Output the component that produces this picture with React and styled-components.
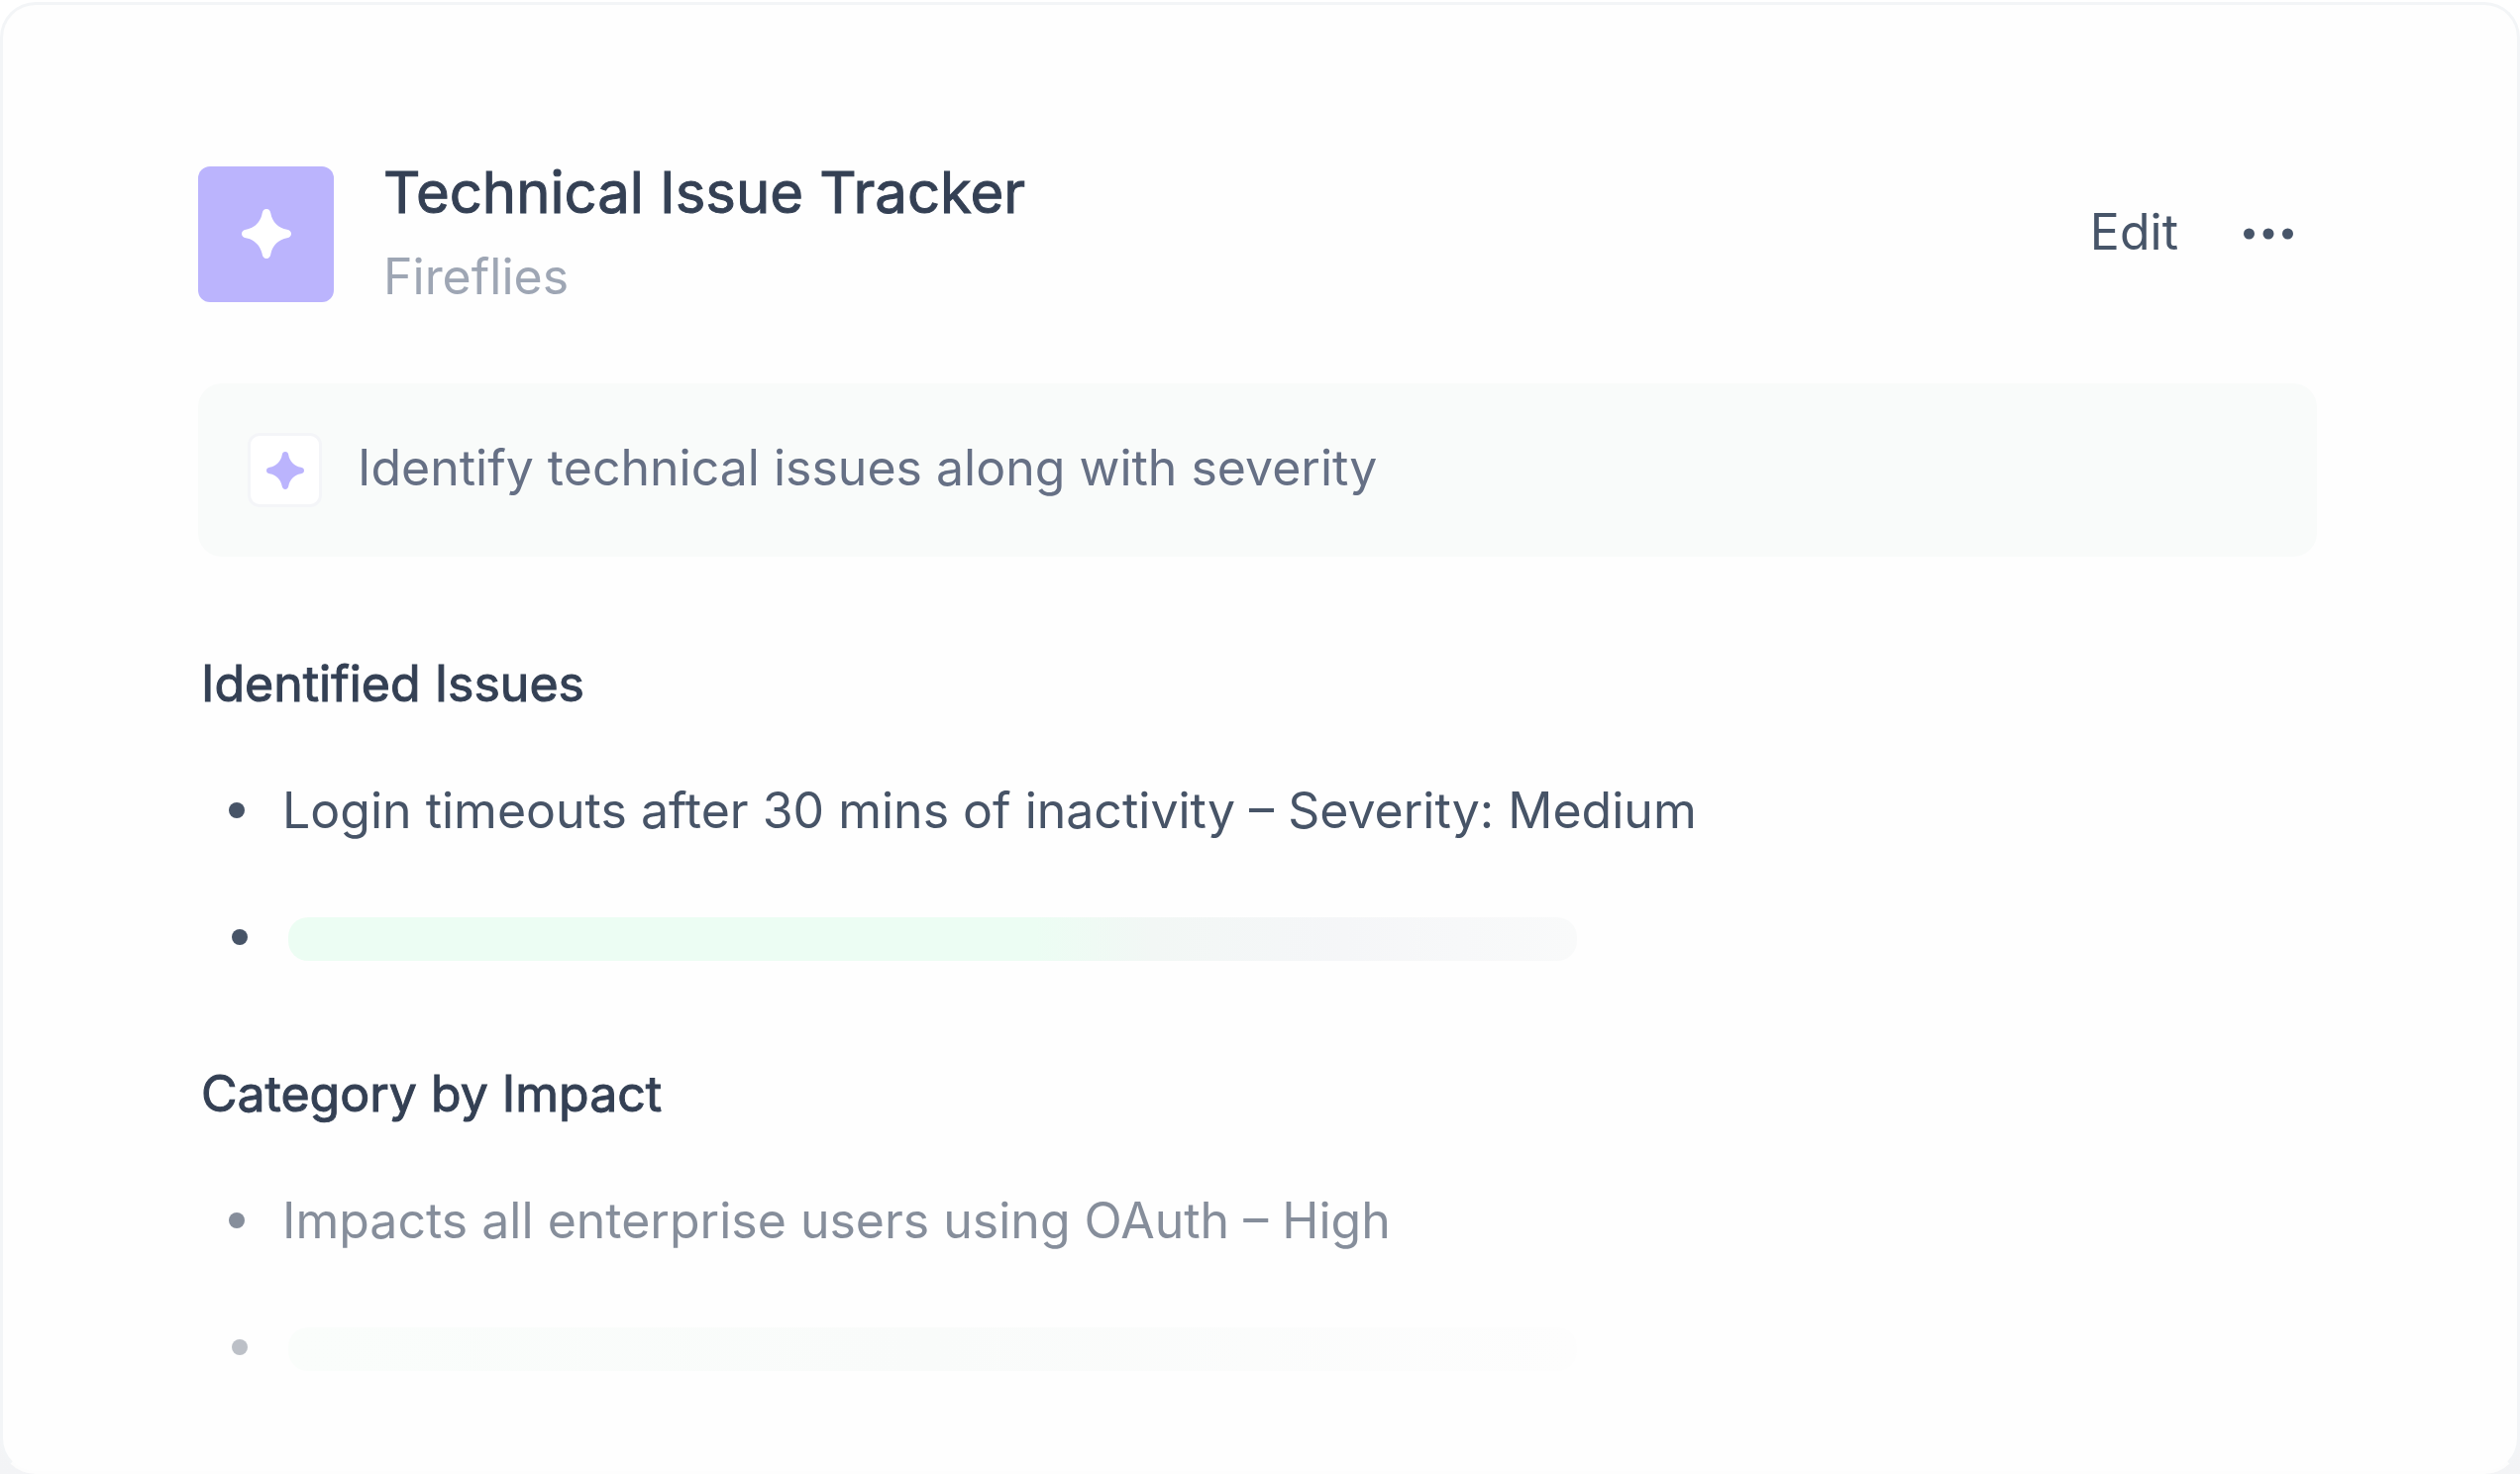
import React from 'react';
import styled, { createGlobalStyle } from 'styled-components';

const issues = [
  {
    title: 'Identified Issues',
    text: 'Login timeouts after 30 mins of inactivity – Severity: Medium',
  },
  {
    title: 'Category by Impact',
    text: 'Impacts all enterprise users using OAuth – High',
    faded: true,
  },
];

const Spark = props => (
  <svg viewBox="0 0 50 50" aria-hidden="true" {...props}>
    <path
      fill="currentColor"
      d="M25 0C27.4 0 28.8 1.6 29.3 4.2C30.8 13 37 19.2 45.8 20.7C48.4 21.2 50 22.6 50 25C50 27.4 48.4 28.8 45.8 29.3C37 30.8 30.8 37 29.3 45.8C28.8 48.4 27.4 50 25 50C22.6 50 21.2 48.4 20.7 45.8C19.2 37 13 30.8 4.2 29.3C1.6 28.8 0 27.4 0 25C0 22.6 1.6 21.2 4.2 20.7C13 19.2 19.2 13 20.7 4.2C21.2 1.6 22.6 0 25 0Z"
    />
  </svg>
);

const App = () => (
  <>
    <GlobalStyle />
    <Card>
      <Header>
        <Tile>
          <Spark width="50" height="50" />
        </Tile>
        <Titles>
          <Title>Technical Issue Tracker</Title>
          <Subtitle>Fireflies</Subtitle>
        </Titles>
        <Actions>
          <EditButton type="button">Edit</EditButton>
          <MoreButton type="button" aria-label="More">
            <svg width="50" height="12" viewBox="0 0 50 12" fill="currentColor">
              <circle cx="5.5" cy="6" r="5.5" />
              <circle cx="25" cy="6" r="5.5" />
              <circle cx="44.5" cy="6" r="5.5" />
            </svg>
          </MoreButton>
        </Actions>
      </Header>

      <Prompt>
        <PromptIcon>
          <Spark width="38" height="38" />
        </PromptIcon>
        <PromptText>Identify technical issues along with severity</PromptText>
      </Prompt>

      <Sections>
        {issues.map(({ title, text, faded }) => (
          <section key={title}>
            <Heading>{title}</Heading>
            <List>
              <Item $opacity={faded ? 0.66 : 1}>{text}</Item>
              <Item $loading $opacity={faded ? 0.36 : 1}>
                <Skeleton $faded={faded} />
              </Item>
            </List>
          </section>
        ))}
      </Sections>
    </Card>
  </>
);

const GlobalStyle = createGlobalStyle`
  * {
    box-sizing: border-box;
  }

  body {
    margin: 0;
    background: linear-gradient(#ffffff 50%, #f3f4f6);
    font-family: Inter, 'Liberation Sans', sans-serif;
  }
`;

const Card = styled.main`
  min-height: calc(100vh - 2px);
  margin-top: 2px;
  padding: 145px 202px 60px 197px;
  border: 3px solid #f3f5f7;
  border-bottom-color: #fdfdfd;
  border-radius: 36px;
  background: #fefefe;
`;

const Header = styled.header`
  display: flex;
  align-items: center;
`;

const Tile = styled.div`
  display: flex;
  align-items: center;
  justify-content: center;
  width: 137px;
  height: 137px;
  border-radius: 12px;
  background: #bbb4fd;
  color: #ffffff;
`;

const Titles = styled.div`
  flex: 1;
  margin-left: 50px;
  padding-top: 2px;
  line-height: 85px;
`;

const Title = styled.h1`
  margin: 0;
  font-size: 58px;
  font-weight: 400;
  color: #344054;
  -webkit-text-stroke: 1px currentColor;
`;

const Subtitle = styled.p`
  margin: 0;
  font-size: 50px;
  color: #9ea6b4;
`;

const Actions = styled.div`
  display: flex;
  align-items: center;
  gap: 66px;
  margin-right: 24px;
`;

const EditButton = styled.button`
  padding: 0 0 4px;
  border: 0;
  background: none;
  font-family: inherit;
  font-size: 50px;
  color: #475569;
`;

const MoreButton = styled.button`
  display: flex;
  padding: 0;
  border: 0;
  background: none;
  color: #475569;
`;

const Prompt = styled.div`
  display: flex;
  align-items: flex-start;
  gap: 36px;
  margin-top: 65px;
  padding: 50px;
  border-radius: 24px;
  background: #f9fbfa;
`;

const PromptIcon = styled.div`
  display: flex;
  align-items: center;
  justify-content: center;
  width: 75px;
  height: 75px;
  border: 3px solid #f4f5f8;
  border-radius: 12px;
  background: #ffffff;
  color: #bbb4fd;
`;

const PromptText = styled.p`
  margin: 0;
  font-size: 50px;
  line-height: 70px;
  color: #667085;
`;

const Sections = styled.div`
  display: flex;
  flex-direction: column;
  gap: 30px;
  margin-top: 64px;
`;

const Heading = styled.h2`
  margin: 0 0 0 3px;
  font-size: 50px;
  font-weight: 400;
  line-height: 128px;
  color: #344054;
  -webkit-text-stroke: 1px currentColor;
`;

const List = styled.ul`
  margin: 0;
  padding: 0;
  list-style: none;
`;

const Item = styled.li`
  display: flex;
  align-items: center;
  gap: ${props => (props.$loading ? 41 : 38)}px;
  height: 128px;
  padding-left: ${props => (props.$loading ? 34 : 31)}px;
  font-size: 50px;
  color: rgba(71, 84, 103, ${props => props.$opacity});

  &::before {
    content: '';
    width: 16px;
    height: 16px;
    border-radius: 50%;
    background: currentColor;
  }
`;

const Skeleton = styled.div`
  width: 100%;
  max-width: 1301px;
  height: 44px;
  margin-top: 3px;
  border-radius: 20px;
  background: ${props =>
    props.$faded
      ? 'linear-gradient(90deg, #fafdfb, #f9fbfa 50%, #fdfdfd)'
      : 'linear-gradient(90deg, #ecfdf3 58%, #f2f7f5 67%, #f5f6f8 82%, #f9fafa)'};
`;

export default App;
